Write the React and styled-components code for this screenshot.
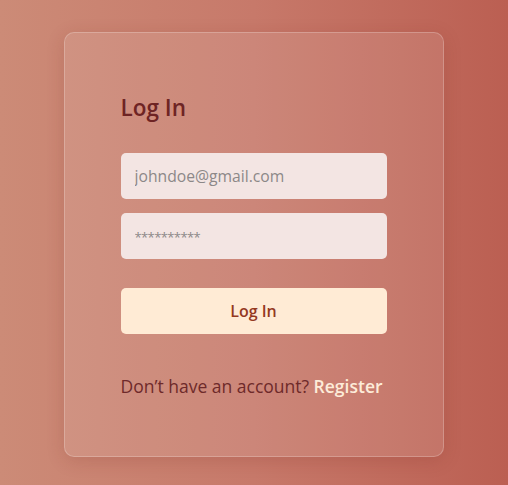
import styled, { createGlobalStyle } from 'styled-components'

const GlobalStyle = createGlobalStyle`
    html, body {
        margin: 0;
        padding: 0;
    }
    body {
        font-family: "Open Sans", "Noto Sans", sans-serif;
    }
`

export default function App() {
    return (
        <Page>
            <GlobalStyle />
            <Card>
                <Title>Log In</Title>
                <Form onSubmit={e => e.preventDefault()}>
                    <Input type="email" placeholder="johndoe@gmail.com" />
                    <Input type="password" placeholder="**********" $masked />
                    <Button type="submit">Log In</Button>
                </Form>
                <Footer>
                    Don’t have an account? <Link href="#">Register</Link>
                </Footer>
            </Card>
        </Page>
    )
}

const Page = styled.div`

    width: 508px;
    height: 485px;
    box-sizing: border-box;
    padding-top: 32px;
    display: flex;
    justify-content: center;
    align-items: flex-start;
    background: linear-gradient(90deg, #cc8b77 0%, #c7796a 50%, #bb5f52 100%);

`
const Card = styled.div`

    width: 380px;
    height: 425px;
    margin-right: 1px;
    box-sizing: border-box;
    padding: 60px 56px 0;
    border-radius: 10px;
    background: rgba(255, 255, 255, 0.1);
    border: 1px solid rgba(255, 255, 255, 0.22);
    box-shadow: 0 4px 18px rgba(120, 40, 30, 0.18);

`
const Title = styled.h1`

    margin: 1px 0 31px;
    font-size: 22.5px;
    font-weight: 600;
    line-height: 28px;
    color: #6e2424;

`
const Form = styled.form`

    display: flex;
    flex-direction: column;
    gap: 14px;

`
const Input = styled.input`

    height: 46px;
    box-sizing: border-box;
    padding: 0 14px;
    border: none;
    border-radius: 5px;
    background: #f3e5e3;
    font-family: inherit;
    font-size: 15.7px;
    color: #444;
    outline: none;

    &::placeholder {
        color: #8c8888;
        font-size: ${props => props.$masked ? '13px' : 'inherit'};
        letter-spacing: ${props => props.$masked ? '-0.6px' : 'normal'};
    }

`
const Button = styled.button`

    margin-top: 15px;
    height: 46px;
    border: none;
    border-radius: 5px;
    background: #ffebd5;
    font-family: inherit;
    font-size: 16px;
    font-weight: 600;
    color: #94391f;
    cursor: pointer;

`
const Footer = styled.p`

    margin: 40px 0 0;
    font-size: 17.5px;
    line-height: 24px;
    color: #6e2a2a;
    white-space: nowrap;

`
const Link = styled.a`

    color: #fdecd9;
    font-weight: 600;
    text-decoration: none;

`
